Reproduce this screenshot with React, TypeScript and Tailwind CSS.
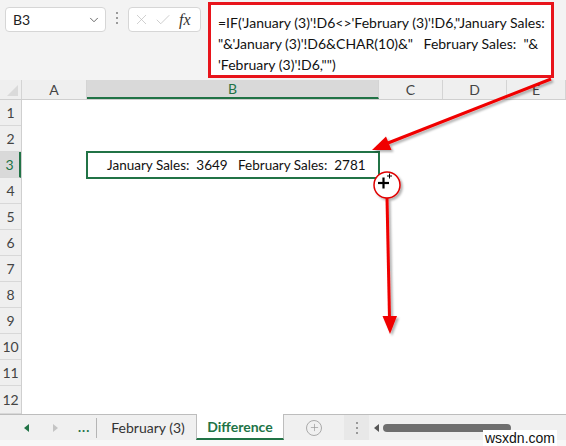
import { ChevronDown, X, Check, Plus } from "lucide-react";

const cols = [
  { label: "A", w: "w-[65px]" },
  { label: "B", w: "w-[292px]", active: true },
  { label: "C", w: "w-[64px]" },
  { label: "D", w: "w-[64px]" },
  { label: "E", w: "flex-1" },
];

const rows = [1, 2, 3, 4, 5, 6, 7, 8, 9, 10, 11, 12];

function Annotations() {
  return (
    <svg
      className="absolute inset-0 pointer-events-none"
      width="566"
      height="446"
      viewBox="0 0 566 446"
    >
      <defs>
        <filter id="sh" x="-20%" y="-20%" width="140%" height="140%">
          <feDropShadow dx="2" dy="2" stdDeviation="1.2" floodColor="#000" floodOpacity="0.3" />
        </filter>
      </defs>
      <g filter="url(#sh)">
        <line x1="551" y1="79" x2="388" y2="143" stroke="#f00000" strokeWidth="3" />
        <polygon points="372,150 391.5,150 386,136.5" fill="#f00000" />
        <line x1="387" y1="198" x2="389.5" y2="318" stroke="#f00000" strokeWidth="3" />
        <polygon points="390,334 382.5,316 397,316" fill="#f00000" />
        <circle cx="387" cy="185" r="13" fill="white" stroke="#e00000" strokeWidth="1.5" />
      </g>
      <line x1="378" y1="183" x2="389" y2="183" stroke="#000" strokeWidth="2.2" />
      <line x1="383.5" y1="177.5" x2="383.5" y2="188.5" stroke="#000" strokeWidth="2.2" />
      <line x1="387" y1="176" x2="392" y2="176" stroke="#000" strokeWidth="1" />
      <line x1="389.5" y1="173.5" x2="389.5" y2="178.5" stroke="#000" strokeWidth="1" />
    </svg>
  );
}

function TopBar() {
  return (
    <div className="h-[80px] flex items-start">
      <div className="ml-[5px] mt-[7px] w-[101px] h-[25px] bg-white border border-[#d6d6d6] rounded-[4px] flex items-center justify-between pl-[7px] pr-[4px] text-[14px] text-[#222]">
        <span>B3</span>
        <ChevronDown size={14} strokeWidth={1.5} className="text-[#555]" />
      </div>
      <div className="w-[22px] mt-[12px] flex flex-col items-center gap-[3px]">
        <span className="w-[2px] h-[2px] bg-[#9a9a9a]" />
        <span className="w-[2px] h-[2px] bg-[#9a9a9a]" />
        <span className="w-[2px] h-[2px] bg-[#9a9a9a]" />
      </div>
      <div className="mt-[7px] w-[73px] h-[25px] bg-white border border-[#d6d6d6] rounded-[4px] flex items-center pl-[4px] gap-[4px]">
        <X size={17} strokeWidth={1} className="text-[#bdbdbd]" />
        <Check size={18} strokeWidth={1} className="text-[#bdbdbd]" />
        <span className="ml-[3px] italic text-[16px] text-[#333] font-['Liberation_Serif',serif]">fx</span>
      </div>
      <div className="ml-[7px] mt-[2px] w-[346px] h-[76px] bg-white border-[3px] border-[#e8141b] pl-[7px] pt-[7px] text-[14px] leading-[21px] text-[#111] whitespace-pre">
        {`=IF('January (3)'!D6<>'February (3)'!D6,"January Sales:\n"&'January (3)'!D6&CHAR(10)&"   February Sales:  "&\n'February (3)'!D6,"")`}
      </div>
    </div>
  );
}

function Grid() {
  return (
    <div className="bg-white">
      <div className="h-[20px] flex bg-[#efefef] border-b border-[#cfcfcf] text-[14px] text-[#444]">
        <div className="w-[22px] border-r border-[#d4d4d4] relative">
          <div className="absolute right-[3px] bottom-[3px] w-0 h-0 border-l-[11px] border-l-transparent border-b-[11px] border-b-[#dadada]" />
        </div>
        {cols.map((c) => (
          <div
            key={c.label}
            className={`${c.w} flex items-center justify-center border-r border-[#d4d4d4] ${
              c.active ? "bg-[#d9d9d9] border-b-2 border-b-[#217346] text-[#217346]" : ""
            }`}
          >
            {c.label}
          </div>
        ))}
      </div>
      <div className="flex">
        <div className="w-[22px] bg-[#efefef] border-r border-[#cfcfcf]">
          {rows.map((r) => (
            <div
              key={r}
              className={`${r === 12 ? "h-[28px]" : "h-[26px]"} flex items-center justify-center border-b border-[#d8d8d8] text-[14px] ${
                r === 3 ? "bg-[#d9d9d9] text-[#217346] border-r-2 border-r-[#217346]" : "text-[#444]"
              }`}
            >
              {r}
            </div>
          ))}
        </div>
        <div className="flex-1 pt-[51px] pl-[64px]">
          <div className="w-[294px] h-[28px] border-2 border-[#217346] flex items-center pl-[19px] text-[13.5px] text-[#111] whitespace-pre">
            {"January Sales:  3649   February Sales:  2781"}
          </div>
        </div>
      </div>
    </div>
  );
}

function TabBar() {
  return (
    <div className="h-[32px] bg-[#f0f0f0] flex flex-col">
      <div className="h-[26px] flex items-stretch border-t border-[#bdbdbd]">
        <div className="w-[196px] flex items-center">
          <span className="ml-[24px] w-0 h-0 border-y-[4px] border-y-transparent border-r-[5px] border-r-[#217346]" />
          <span className="ml-[24px] w-0 h-0 border-y-[4px] border-y-transparent border-l-[5px] border-l-[#c4c4c4]" />
          <span className="ml-[20px] text-[13px] font-bold text-[#217346] tracking-[1px] leading-none">...</span>
          <span className="ml-[6px] w-px h-[20px] bg-[#b5b5b5]" />
          <span className="ml-[14px] text-[14px] text-[#333]">February (3)</span>
        </div>
        <div className="w-[88px] -mt-px bg-white border-x border-[#bdbdbd] border-b-2 border-b-[#217346] flex items-center justify-center text-[14px] font-bold text-[#217346]">
          Difference
        </div>
        <div className="w-[60px] flex items-center justify-center">
          <span className="w-[16px] h-[16px] rounded-full border border-[#aaa] flex items-center justify-center">
            <Plus size={11} strokeWidth={1.5} className="text-[#999]" />
          </span>
        </div>
        <div className="w-[25px] bg-[#e8e8e8] flex flex-col items-center justify-center gap-[3px]">
          <span className="w-[2px] h-[2px] bg-[#999]" />
          <span className="w-[2px] h-[2px] bg-[#999]" />
          <span className="w-[2px] h-[2px] bg-[#999]" />
        </div>
        <div className="flex-1 flex items-center relative">
          <span className="ml-[5px] w-0 h-0 border-y-[4px] border-y-transparent border-r-[5px] border-r-[#555]" />
          <span className="ml-[4px] w-[128px] h-[8px] rounded-full bg-[#6f6f6f]" />
          <span className="absolute right-[9px] bottom-[-6px] bg-white px-[2px] text-[14px] leading-[16px] text-[#111] font-['Liberation_Sans',sans-serif]">
            wsxdn.com
          </span>
        </div>
      </div>
      <div className="flex-1 bg-[#f7f7f7]" />
    </div>
  );
}

export default function App() {
  return (
    <div className="w-[566px] h-[446px] relative overflow-hidden bg-[#f3f3f3] font-['Lato',sans-serif]">
      <TopBar />
      <Grid />
      <TabBar />
      <Annotations />
    </div>
  );
}
